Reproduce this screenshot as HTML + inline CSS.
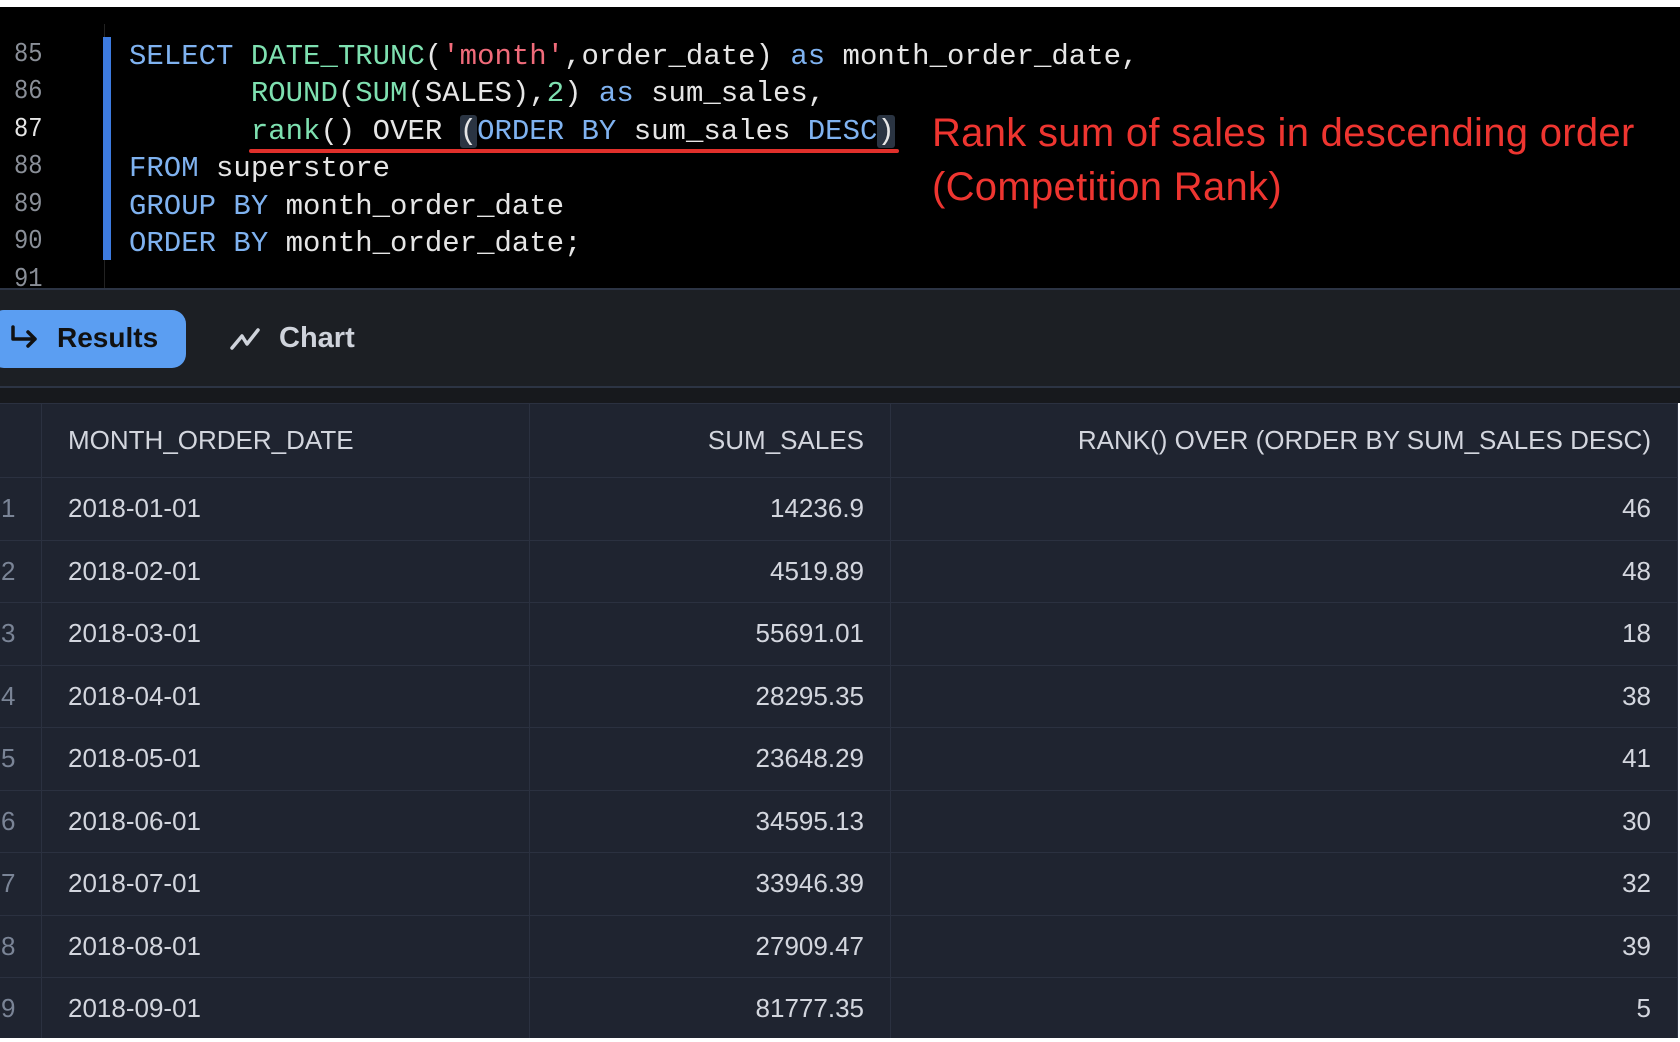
<!DOCTYPE html>
<html><head><meta charset="utf-8"><style>
*{margin:0;padding:0;box-sizing:border-box}
body{width:1680px;height:1042px;background:#fff;position:relative;overflow:hidden;font-family:"Liberation Sans",sans-serif}
.code{position:absolute;left:0;top:7px;width:1680px;height:281px;background:#000}
.ln{position:absolute;left:14px;font:27px "Liberation Mono",monospace;color:#8a8f98;transform:scaleX(.88);transform-origin:left}
.cl{position:absolute;left:129px;font:29px "Liberation Mono",monospace;color:#e6e6e6;white-space:pre}
.k{color:#7fb2f0}.f{color:#7ee0b0}.s{color:#f06b7a}.n{color:#7ee0b0}
.hl{background:#2a3442;border-radius:3px}
.ann{position:absolute;left:932px;font-size:40px;color:#ee3530;line-height:54px;letter-spacing:.3px}
.tb{position:absolute;left:0;top:288px;width:1680px;height:100px;background:#1c1f24;border-top:2px solid #2c3444;border-bottom:2px solid #2c3444}
.gap{position:absolute;left:0;top:388px;width:1680px;height:15px;background:#17191d}
table{position:absolute;left:-2px;top:403px;border-collapse:collapse;background:#1f2430;color:#d3d6de;font-size:26px}
td{height:62.5px;border:1px solid #2b3140;padding:0 26px}
tr:first-child td{height:74px}
td.r{text-align:right}
td.i{width:43px;padding:0 0 0 2px;color:#7a8496}
</style></head><body>
<div class="code">
<div style="position:absolute;left:104px;top:17px;width:1px;height:264px;background:#222"></div>
<div style="position:absolute;left:103px;top:30px;width:8px;height:223px;background:#3d7be0"></div>
<div class="ln" style="top:33px">85</div>
<div class="ln" style="top:70px">86</div>
<div class="ln" style="top:108px;color:#e6e6e6">87</div>
<div class="ln" style="top:145px">88</div>
<div class="ln" style="top:183px">89</div>
<div class="ln" style="top:220px">90</div>
<div class="ln" style="top:258px">91</div>
<div class="cl" style="top:33px"><span class="k">SELECT</span> <span class="f">DATE_TRUNC</span>(<span class="s">'month'</span>,order_date) <span class="k">as</span> month_order_date,</div>
<div class="cl" style="top:70px">       <span class="f">ROUND</span>(<span class="f">SUM</span>(SALES),<span class="n">2</span>) <span class="k">as</span> sum_sales,</div>
<div class="cl" style="top:108px">       <span class="f">rank</span>() OVER <span class="hl">(</span><span class="k">ORDER BY</span> sum_sales <span class="k">DESC</span><span class="hl">)</span></div>
<div class="cl" style="top:145px"><span class="k">FROM</span> superstore</div>
<div class="cl" style="top:183px"><span class="k">GROUP BY</span> month_order_date</div>
<div class="cl" style="top:220px"><span class="k">ORDER BY</span> month_order_date;</div>
<div style="position:absolute;left:249px;top:142px;width:650px;height:4px;background:#e0302b;border-radius:2px"></div>
<div class="ann" style="top:99px">Rank sum of sales in descending order</div>
<div class="ann" style="top:153px">(Competition Rank)</div>
</div>
<div class="tb">
<div style="position:absolute;left:-10px;top:20px;width:196px;height:58px;background:#5b9ef2;border-radius:14px"></div>
<svg style="position:absolute;left:8px;top:34px" width="34" height="28" viewBox="0 0 34 28"><path d="M5 3v12h22M20 8l7 7-7 7" fill="none" stroke="#111" stroke-width="3.5" stroke-linecap="round" stroke-linejoin="round"/></svg>
<div style="position:absolute;left:57px;top:32px;font-size:28px;font-weight:bold;color:#111">Results</div>
<svg style="position:absolute;left:229px;top:36px" width="32" height="26" viewBox="0 0 32 26"><path d="M3 22L13 10l5 8L29 4" fill="none" stroke="#cfd3db" stroke-width="3.5" stroke-linecap="round" stroke-linejoin="round"/></svg>
<div style="position:absolute;left:279px;top:32px;font-size:29px;font-weight:bold;color:#cfd3db">Chart</div>
</div>
<div class="gap"></div>
<table>
<tr><td class="i"></td><td style="width:488px">MONTH_ORDER_DATE</td><td class="r" style="width:361px">SUM_SALES</td><td class="r" style="width:787px">RANK() OVER (ORDER BY SUM_SALES DESC)</td></tr>
<tr><td class="i">1</td><td>2018-01-01</td><td class="r">14236.9</td><td class="r">46</td></tr>
<tr><td class="i">2</td><td>2018-02-01</td><td class="r">4519.89</td><td class="r">48</td></tr>
<tr><td class="i">3</td><td>2018-03-01</td><td class="r">55691.01</td><td class="r">18</td></tr>
<tr><td class="i">4</td><td>2018-04-01</td><td class="r">28295.35</td><td class="r">38</td></tr>
<tr><td class="i">5</td><td>2018-05-01</td><td class="r">23648.29</td><td class="r">41</td></tr>
<tr><td class="i">6</td><td>2018-06-01</td><td class="r">34595.13</td><td class="r">30</td></tr>
<tr><td class="i">7</td><td>2018-07-01</td><td class="r">33946.39</td><td class="r">32</td></tr>
<tr><td class="i">8</td><td>2018-08-01</td><td class="r">27909.47</td><td class="r">39</td></tr>
<tr><td class="i">9</td><td>2018-09-01</td><td class="r">81777.35</td><td class="r">5</td></tr>
</table>
<div style="position:absolute;left:0;top:1038px;width:1680px;height:4px;background:#fff"></div>
</body></html>
